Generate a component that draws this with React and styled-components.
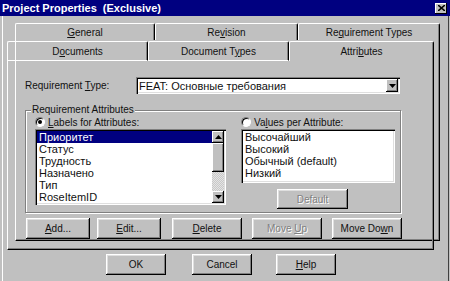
import React from "react";
import styled, { createGlobalStyle } from "styled-components";

const GlobalStyle = createGlobalStyle`
  html, body {
    margin: 0;
    padding: 0;
    background: #c0c0c0;
  }
  body {
    font-family: "Liberation Sans", Arial, sans-serif;
    color: #111;
  }
`;

const Window = styled.div`
  width: 450px;
  height: 281px;
  display: flex;
  flex-direction: column;
  background: #c0c0c0;
  overflow: hidden;
`;

const TitleBar = styled.div`
  height: 16px;
  flex: none;
  background: #000080;
  display: flex;
  align-items: center;
  justify-content: space-between;
  padding: 0 3px 0 2px;
  box-sizing: border-box;
`;

const Title = styled.span`
  color: #fff;
  font-weight: bold;
  font-size: 11px;
  white-space: pre;
`;

const CloseBox = styled.div`
  width: 12px;
  height: 11px;
  background: #c0c0c0;
  box-shadow: inset -1px -1px #000, inset 1px 1px #fff;
  display: flex;
  align-items: center;
  justify-content: center;
`;

const Body = styled.div`
  flex: 1;
  display: flex;
  flex-direction: column;
  margin: 0 1px 0 2px;
  border-left: 1px solid #fff;
  border-right: 1px solid #404040;
`;

const SheetStack = styled.div`
  display: grid;
  align-items: start;
  justify-items: start;

  & > * {
    grid-area: 1 / 1;
  }
`;

const BackSheet = styled.div`
  margin: 6px 0 0 12px;
  width: 425px;
  height: 219px;
  display: flex;
  flex-direction: column;
`;

const BackBody = styled.div`
  flex: 1;
  border-left: 1px solid #fff;
  border-right: 1px solid #000;
  border-bottom: 1px solid #000;
  box-shadow: inset -1px -1px #808080;
`;

const FrontSheet = styled.div`
  margin: 24px 0 0 4px;
  width: 427px;
  height: 210px;
  display: flex;
  flex-direction: column;
`;

const TabRow = styled.div`
  display: flex;
  height: ${(p) => p.$h}px;
  flex: none;
`;

const Tab = styled.div`
  box-sizing: border-box;
  ${(p) => (p.$w ? `width: ${p.$w}px;` : "flex: 1;")}
  margin-top: 1px;
  border-top: 1px solid #fff;
  border-left: 1px solid #fff;
  border-right: 1px solid #000;
  border-bottom: ${(p) => (p.$front && !p.$active ? "1px solid #fff" : "none")};
  border-top-left-radius: 2px;
  border-top-right-radius: 2px;
  box-shadow: inset -1px 0 #808080;
  display: flex;
  align-items: center;
  justify-content: center;
  font-size: 10px;
`;

const Panel = styled.div`
  flex: 1;
  border-left: 1px solid #fff;
  border-right: 1px solid #000;
  border-bottom: 1px solid #000;
  box-shadow: inset -1px -1px #808080;
  padding: 16px 0 0 17px;
  display: flex;
  flex-direction: column;
  align-items: flex-start;
`;

const TypeRow = styled.div`
  display: flex;
  align-items: center;
  height: 17px;
`;

const Label = styled.span`
  font-size: 10px;
  width: ${(p) => (p.$w ? `${p.$w}px` : "auto")};
  white-space: nowrap;
`;

const Combo = styled.div`
  width: 264px;
  height: 17px;
  box-sizing: border-box;
  background: #fff;
  box-shadow: inset 1px 1px #808080, inset 2px 2px #000, inset -1px -1px #fff,
    inset -2px -2px #dfdfdf;
  display: flex;
  align-items: center;
  padding: 0 2px 0 3px;
  font-size: 11px;
`;

const ComboButton = styled.div`
  margin-left: auto;
  width: 12px;
  height: 13px;
  background: #c0c0c0;
  box-shadow: inset -1px -1px #000, inset 1px 1px #fff, inset -2px -2px #808080;
  display: flex;
  align-items: center;
  justify-content: center;
`;

const Group = styled.div`
  margin-top: 16px;
  width: 376px;
  height: 103px;
  box-sizing: border-box;
  border: 1px solid #808080;
  box-shadow: inset 1px 1px #fff, 1px 1px #fff;
  padding-left: 9px;
  display: flex;
  flex-direction: column;
  align-items: flex-start;
`;

const Legend = styled.span`
  margin: -7px 0 0 -4px;
  padding: 0 1px;
  background: #c0c0c0;
  font-size: 10px;
  line-height: 12px;
`;

const Columns = styled.div`
  display: flex;
  gap: 15px;
`;

const Column = styled.div`
  width: ${(p) => p.$w}px;
  display: flex;
  flex-direction: column;
  align-items: flex-start;
`;

const RadioRow = styled.div`
  height: 12px;
  display: flex;
  align-items: center;
  gap: 3px;
  font-size: 10px;
`;

const Radio = styled.span`
  width: 10px;
  height: 10px;
  box-sizing: border-box;
  border-radius: 50%;
  background: #fff;
  border: 1px solid #808080;
  border-right-color: #fff;
  border-bottom-color: #fff;
  box-shadow: inset 1px 1px #000;
  display: flex;
  align-items: center;
  justify-content: center;

  &::after {
    content: "";
    width: 4px;
    height: 4px;
    border-radius: 50%;
    background: ${(p) => (p.$on ? "#000" : "transparent")};
  }
`;

const ListBox = styled.div`
  margin-top: 1px;
  width: ${(p) => p.$w}px;
  height: ${(p) => p.$h}px;
  box-sizing: border-box;
  background: #fff;
  padding: 2px;
  box-shadow: inset 1px 1px #808080, inset 2px 2px #000, inset -1px -1px #fff,
    inset -2px -2px #dfdfdf;
  display: flex;
`;

const Items = styled.div`
  flex: 1;
  display: flex;
  flex-direction: column;
`;

const Item = styled.div`
  height: 12px;
  line-height: 12px;
  padding-left: 2px;
  font-size: 11px;
  white-space: nowrap;
  background: ${(p) => (p.$sel ? "#000080" : "transparent")};
  color: ${(p) => (p.$sel ? "#fff" : "#111")};
`;

const ScrollBar = styled.div`
  width: 12px;
  display: flex;
  flex-direction: column;
`;

const ScrollPart = styled.div`
  height: ${(p) => p.$h}px;
  flex: none;
  background: #c0c0c0;
  box-shadow: inset -1px -1px #000, inset 1px 1px #fff, inset -2px -2px #808080;
  display: flex;
  align-items: center;
  justify-content: center;
`;

const Track = styled.div`
  flex: 1;
  background-color: #e4e4e4;
  background-image: linear-gradient(45deg, #c8c8c8 25%, transparent 25%, transparent 75%, #c8c8c8 75%),
    linear-gradient(45deg, #c8c8c8 25%, transparent 25%, transparent 75%, #c8c8c8 75%);
  background-size: 2px 2px;
  background-position: 0 0, 1px 1px;
`;

const Button = styled.button`
  width: ${(p) => p.$w}px;
  height: ${(p) => p.$h || 21}px;
  margin-left: ${(p) => p.$ml || 0}px;
  margin-top: ${(p) => p.$mt || 0}px;
  box-sizing: border-box;
  padding: 0;
  border: none;
  background: #c0c0c0;
  box-shadow: inset -1px -1px #000, inset 1px 1px #fff, inset -2px -2px #808080,
    inset 2px 2px #dfdfdf;
  font-family: "Liberation Sans", Arial, sans-serif;
  font-size: 10px;
  color: #111;

  &:disabled {
    color: #808080;
    text-shadow: 1px 1px #fff;
  }
`;

const ButtonRow = styled.div`
  display: flex;
  margin: 5px 0 0 1px;
`;

const Footer = styled.div`
  display: flex;
  margin-top: 4px;
  padding-left: 103px;
`;

const Arrow = ({ down }) => (
  <svg width="7" height="4" viewBox="0 0 7 4">
    <path d={down ? "M0 0h7L3.5 4z" : "M0 4h7L3.5 0z"} fill="#000" />
  </svg>
);

const labels = ["Приоритет", "Статус", "Трудность", "Назначено", "Тип", "RoseItemID"];
const values = ["Высочайший", "Высокий", "Обычный (default)", "Низкий"];

export default function App() {
  return (
    <Window>
      <GlobalStyle />
      <TitleBar>
        <Title>Project Properties  (Exclusive)</Title>
        <CloseBox>
          <svg width="7" height="6" viewBox="0 0 7 6">
            <path d="M0 0l7 6M7 0L0 6" stroke="#000" strokeWidth="1.6" />
          </svg>
        </CloseBox>
      </TitleBar>
      <Body>
        <SheetStack>
          <BackSheet>
            <TabRow $h={18}>
              <Tab $w={140}>
                <span><u>G</u>eneral</span>
              </Tab>
              <Tab $w={143}>
                <span>Re<u>v</u>ision</span>
              </Tab>
              <Tab>
                <span>Re<u>q</u>uirement Types</span>
              </Tab>
            </TabRow>
            <BackBody />
          </BackSheet>
          <FrontSheet>
            <TabRow $h={21}>
              <Tab $front $w={141}>
                <span>D<u>o</u>cuments</span>
              </Tab>
              <Tab $front $w={141}>
                <span>Document T<u>y</u>pes</span>
              </Tab>
              <Tab $front $active>
                <span>Attri<u>b</u>utes</span>
              </Tab>
            </TabRow>
            <Panel>
              <TypeRow>
                <Label $w={111}>
                  Requirement <u>T</u>ype:
                </Label>
                <Combo>
                  FEAT: Основные требования
                  <ComboButton>
                    <Arrow down />
                  </ComboButton>
                </Combo>
              </TypeRow>
              <Group>
                <Legend>Requirement Attributes</Legend>
                <Columns>
                  <Column $w={191}>
                    <RadioRow>
                      <Radio $on />
                      <span>
                        <u>L</u>abels for Attributes:
                      </span>
                    </RadioRow>
                    <ListBox $w={191} $h={76}>
                      <Items>
                        {labels.map((l, i) => (
                          <Item key={l} $sel={i === 0}>
                            {l}
                          </Item>
                        ))}
                      </Items>
                      <ScrollBar>
                        <ScrollPart $h={12}>
                          <Arrow />
                        </ScrollPart>
                        <ScrollPart $h={29} />
                        <Track />
                        <ScrollPart $h={12}>
                          <Arrow down />
                        </ScrollPart>
                      </ScrollBar>
                    </ListBox>
                  </Column>
                  <Column $w={154}>
                    <RadioRow>
                      <Radio />
                      <span>
                        Va<u>l</u>ues per Attribute:
                      </span>
                    </RadioRow>
                    <ListBox $w={154} $h={54}>
                      <Items>
                        {values.map((v) => (
                          <Item key={v}>{v}</Item>
                        ))}
                      </Items>
                    </ListBox>
                    <Button $w={71} $h={20} $ml={36} $mt={6} disabled>
                      Default
                    </Button>
                  </Column>
                </Columns>
              </Group>
              <ButtonRow>
                <Button $w={64}>
                  <u>A</u>dd...
                </Button>
                <Button $w={64} $ml={7}>
                  <u>E</u>dit...
                </Button>
                <Button $w={70} $ml={11}>
                  <u>D</u>elete
                </Button>
                <Button $w={70} $ml={10} disabled>
                  Move <u>U</u>p
                </Button>
                <Button $w={70} $ml={10}>
                  Move Do<u>w</u>n
                </Button>
              </ButtonRow>
            </Panel>
          </FrontSheet>
        </SheetStack>
        <Footer>
          <Button $w={60}>OK</Button>
          <Button $w={60} $ml={26}>
            Cancel
          </Button>
          <Button $w={60} $ml={24}>
            <u>H</u>elp
          </Button>
        </Footer>
      </Body>
    </Window>
  );
}
